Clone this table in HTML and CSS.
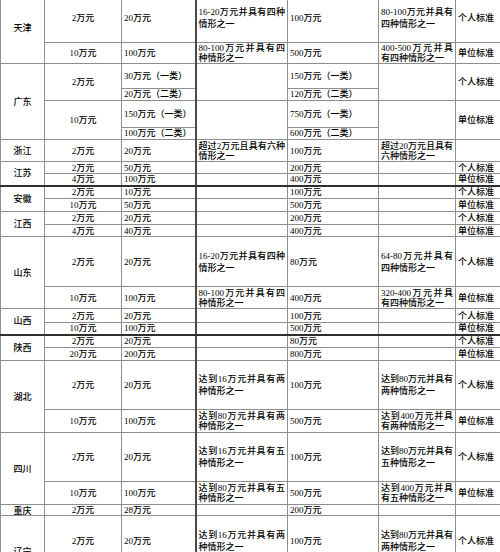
FILE: index.html
```html
<!DOCTYPE html>
<html lang="zh-CN">
<head>
<meta charset="utf-8">
<title>立案追诉标准</title>
<link rel="stylesheet" href="styles.css">
</head>
<body>
<div class="sheet">
<table class="grid">
<colgroup>
<col class="k1"><col class="k2"><col class="k3"><col class="k4"><col class="k5"><col class="k6"><col class="k7">
</colgroup>
<tbody>
<tr class="h50 tall"><td class="m prov" rowspan="2">天津</td><td class="m">2万元</td><td>20万元</td><td class="j">16-20万元并具有四种情形之一</td><td>100万元</td><td class="j">80-100万元并具有四种情形之一</td><td>个人标准</td></tr>
<tr class="h21"><td class="m">10万元</td><td>100万元</td><td class="j">80-100万元并具有四种情形之一</td><td>500万元</td><td class="j">400-500万元并具有四种情形之一</td><td>单位标准</td></tr>

<tr class="h25"><td class="m prov" rowspan="4">广东</td><td class="m" rowspan="2">2万元</td><td>30万元（一类）</td><td rowspan="2"></td><td>150万元（一类）</td><td rowspan="2"></td><td rowspan="2">个人标准</td></tr>
<tr class="h12 sub"><td class="lt">20万元（二类）</td><td class="lt">120万元（二类）</td></tr>
<tr class="h27"><td class="m" rowspan="2">10万元</td><td>150万元（一类）</td><td rowspan="2"></td><td>750万元（一类）</td><td rowspan="2"></td><td rowspan="2">单位标准</td></tr>
<tr class="h12 sub"><td class="lt">100万元（二类）</td><td class="lt">600万元（二类）</td></tr>

<tr class="h22"><td class="m prov">浙江</td><td class="m">2万元</td><td>20万元</td><td class="j">超过2万元且具有六种情形之一</td><td>100万元</td><td class="j">超过20万元且具有六种情形之一</td><td></td></tr>

<tr class="h12"><td class="m prov" rowspan="2">江苏</td><td class="m">2万元</td><td>50万元</td><td></td><td>200万元</td><td></td><td>个人标准</td></tr>
<tr class="h12"><td class="m">4万元</td><td>100万元</td><td></td><td>400万元</td><td></td><td>单位标准</td></tr>

<tr class="h13 dark"><td class="m prov" rowspan="2">安徽</td><td class="m">2万元</td><td>10万元</td><td></td><td>100万元</td><td></td><td>个人标准</td></tr>
<tr class="h13"><td class="m">10万元</td><td>50万元</td><td></td><td>500万元</td><td></td><td>单位标准</td></tr>

<tr class="h13"><td class="m prov" rowspan="2">江西</td><td class="m">2万元</td><td>20万元</td><td></td><td>200万元</td><td></td><td>个人标准</td></tr>
<tr class="h12"><td class="m">4万元</td><td>40万元</td><td></td><td>400万元</td><td></td><td>单位标准</td></tr>

<tr class="h50 tall"><td class="m prov" rowspan="2">山东</td><td class="m">2万元</td><td>20万元</td><td class="j">16-20万元并具有四种情形之一</td><td>80万元</td><td class="j">64-80万元并具有四种情形之一</td><td>个人标准</td></tr>
<tr class="h22"><td class="m">10万元</td><td>100万元</td><td class="j">80-100万元并具有四种情形之一</td><td>400万元</td><td class="j">320-400万元并具有四种情形之一</td><td>单位标准</td></tr>

<tr class="h14"><td class="m prov" rowspan="2">山西</td><td class="m">2万元</td><td>20万元</td><td></td><td>100万元</td><td></td><td>个人标准</td></tr>
<tr class="h12"><td class="m">10万元</td><td>100万元</td><td></td><td>500万元</td><td></td><td>单位标准</td></tr>

<tr class="h13 dark"><td class="m prov" rowspan="2">陕西</td><td class="m">2万元</td><td>20万元</td><td></td><td>80万元</td><td></td><td>个人标准</td></tr>
<tr class="h13"><td class="m">20万元</td><td>200万元</td><td></td><td>800万元</td><td></td><td>单位标准</td></tr>

<tr class="h49 tall"><td class="m prov" rowspan="2">湖北</td><td class="m">2万元</td><td>20万元</td><td class="j">达到16万元并具有两种情形之一</td><td>100万元</td><td class="j">达到80万元并具有两种情形之一</td><td>个人标准</td></tr>
<tr class="h23"><td class="m">10万元</td><td>100万元</td><td class="j">达到80万元并具有两种情形之一</td><td>500万元</td><td class="j">达到400万元并具有两种情形之一</td><td>单位标准</td></tr>

<tr class="h49 tall"><td class="m prov" rowspan="2">四川</td><td class="m">2万元</td><td>20万元</td><td class="j">达到16万元并具有五种情形之一</td><td>100万元</td><td class="j">达到80万元并具有五种情形之一</td><td>个人标准</td></tr>
<tr class="h23"><td class="m">10万元</td><td>100万元</td><td class="j">达到80万元并具有五种情形之一</td><td>500万元</td><td class="j">达到400万元并具有五种情形之一</td><td>单位标准</td></tr>

<tr class="h11"><td class="m prov">重庆</td><td class="m">2万元</td><td>28万元</td><td></td><td>200万元</td><td></td><td></td></tr>

<tr class="h50 tall"><td class="m prov" rowspan="2">辽宁</td><td class="m">2万元</td><td>20万元</td><td class="j">达到16万元并具有两种情形之一</td><td>100万元</td><td class="j">达到80万元并具有两种情形之一</td><td>个人标准</td></tr>
<tr class="h22"><td class="m">10万元</td><td>100万元</td><td class="j">达到80万元并具有两种情形之一</td><td>500万元</td><td class="j">达到400万元并具有两种情形之一</td><td>单位标准</td></tr>
</tbody>
</table>
</div>
</body>
</html>
```

FILE: styles.css
```css
html, body {
  margin: 0;
  padding: 0;
  background: #ffffff;
}

.sheet {
  width: 500px;
  height: 552px;
  overflow: hidden;
}

.grid {
  border-collapse: collapse;
  table-layout: fixed;
  width: 535px;
  margin-top: -8px;
  font-family: "Liberation Serif", "Noto Sans CJK SC", serif;
  font-size: 9px;
  font-weight: 500;
  line-height: 10px;
  color: #000000;
}

.k1 { width: 44px; border-left: 1px solid #555; }
.k2 { width: 77px; }
.k3 { width: 74px; }
.k4 { width: 92px; border-left: 2px solid #4a4a4a; }
.k5 { width: 91px; }
.k6 { width: 77px; }
.k7 { width: 80px; }

.grid td {
  border: 1px solid #8e8e8e;
  padding: 0 1px 0 2px;
  vertical-align: middle;
  text-align: left;
  overflow: hidden;
  word-break: normal;
}

.grid td.m {
  text-align: center;
  padding: 0;
}

.grid td.prov {
  font-family: "Noto Sans CJK SC", sans-serif;
}

.grid td.j {
  text-align: justify;
  line-height: 10px;
  padding: 0 2px 0 2px;
}

.grid tr.tall td.j {
  line-height: 12px;
}

.grid tr.sub td {
  line-height: 9px;
}

.grid tr.sub td.lt {
  border-top: 1px solid #d6d6d6;
}

.grid tr.dark td {
  border-top: 2px solid #2e2e2e;
}

.h11 { height: 11px; }
.h11 td { line-height: 9px; }
.h12 { height: 12px; }
.h13 { height: 13px; }
.h14 { height: 14px; }
.h21 { height: 21px; }
.h22 { height: 22px; }
.h23 { height: 23px; }
.h25 { height: 25px; }
.h27 { height: 27px; }
.h49 { height: 49px; }
.h50 { height: 50px; }
```
